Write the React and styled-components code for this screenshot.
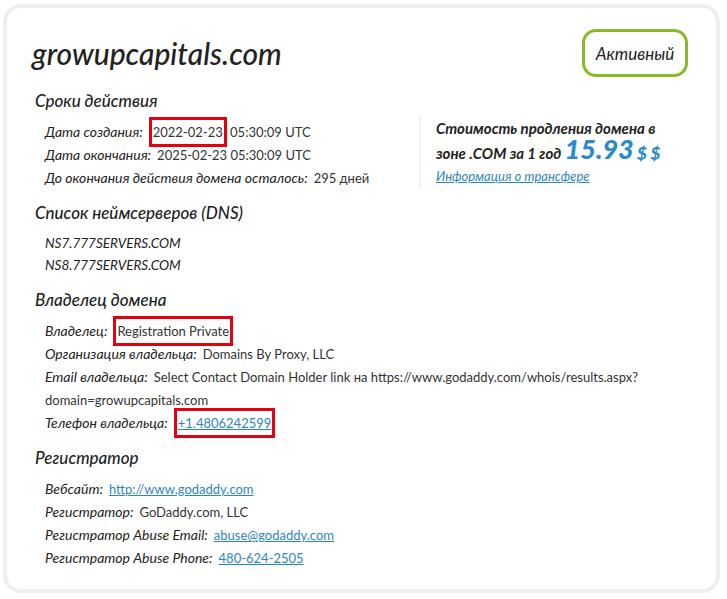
import React from 'react'
import styled, { createGlobalStyle } from 'styled-components'

const GlobalStyle = createGlobalStyle`
    body {
        margin: 0;
        background: #ffffff;
        font-family: "Lato", "Open Sans", sans-serif;
        color: #222;
    }
`

const periodRows = [
    { label: 'Дата создания:', value: '2022-02-23', rest: ' 05:30:09 UTC', mark: true },
    { label: 'Дата окончания:', value: '2025-02-23 05:30:09 UTC' },
    { label: 'До окончания действия домена осталось:', value: '295 дней' },
]

const ownerRows = [
    { label: 'Владелец:', value: 'Registration Private', mark: true },
    { label: 'Организация владельца:', value: 'Domains By Proxy, LLC' },
    { label: 'Email владельца:', value: 'Select Contact Domain Holder link на https://www.godaddy.com/whois/results.aspx?domain=growupcapitals.com' },
    { label: 'Телефон владельца:', value: '+1.4806242599', mark: true, link: true },
]

const registrarRows = [
    { label: 'Вебсайт:', value: 'http://www.godaddy.com', link: true },
    { label: 'Регистратор:', value: 'GoDaddy.com, LLC' },
    { label: 'Регистратор Abuse Email:', value: 'abuse@godaddy.com', link: true },
    { label: 'Регистратор Abuse Phone:', value: '480-624-2505', link: true },
]

const InfoRow = ({ row }) => {
    const content = row.link ? <Link href="#">{row.value}</Link> : row.value
    return (
        <Row>
            <Label>{row.label}</Label>
            {row.mark ? <Marked>{content}</Marked> : <Value>{content}</Value>}
            {row.rest && <Value>{row.rest}</Value>}
        </Row>
    )
}

const App = () => {
    return (
        <>
            <GlobalStyle />
            <Card>
                <Header>
                    <Domain>growupcapitals.com</Domain>
                    <Status>Активный</Status>
                </Header>

                <Section>
                    <Heading>Сроки действия</Heading>
                    <Split>
                        <Rows>
                            {periodRows.map(r => <InfoRow key={r.label} row={r} />)}
                        </Rows>
                        <PriceBox>
                            <PriceText>
                                Стоимость продления домена в зоне .COM за 1 год <Price>15.93</Price> <Currency>$ $</Currency>
                            </PriceText>
                            <TransferLink href="#">Информация о трансфере</TransferLink>
                        </PriceBox>
                    </Split>
                </Section>

                <Section>
                    <Heading>Список неймсерверов (DNS)</Heading>
                    <Rows>
                        <NsRow>NS7.777SERVERS.COM</NsRow>
                        <NsRow>NS8.777SERVERS.COM</NsRow>
                    </Rows>
                </Section>

                <Section>
                    <Heading>Владелец домена</Heading>
                    <Rows>
                        {ownerRows.map(r => <InfoRow key={r.label} row={r} />)}
                    </Rows>
                </Section>

                <Section>
                    <Heading>Регистратор</Heading>
                    <Rows>
                        {registrarRows.map(r => <InfoRow key={r.label} row={r} />)}
                    </Rows>
                </Section>
            </Card>
        </>
    )
}

const Card = styled.div`
    box-sizing: border-box;
    width: 717px;
    height: 589px;
    margin: 4px 0 0 3px;
    border: 4px solid #efefef;
    border-radius: 18px;
    background: #ffffff;
    padding: 21px 28px 0 25px;
`

const Header = styled.div`
    display: flex;
    justify-content: space-between;
    align-items: center;
`

const Domain = styled.h1`
    margin: 0;
    font-size: 30px;
    font-style: italic;
    font-weight: 500;
    color: #222;
    line-height: 34px;
`

const Status = styled.div`
    box-sizing: border-box;
    height: 48px;
    width: 106px;
    border: 3px solid #8cb92b;
    border-radius: 14px;
    display: flex;
    align-items: center;
    justify-content: center;
    font-size: 17px;
    font-style: italic;
    color: #222;
`

const Section = styled.div`
    margin-top: 12px;
`

const Heading = styled.h2`
    margin: 0 0 7px 3px;
    font-size: 17px;
    line-height: 24px;
    font-weight: 500;
    font-style: italic;
    color: #222;
`

const Split = styled.div`
    display: flex;
    align-items: flex-start;
`

const Rows = styled.div`
    flex: 1;
    padding-left: 13px;
    max-width: 630px;
`

const Row = styled.div`
    font-size: 14px;
    line-height: 23px;
`

const NsRow = styled.div`
    font-size: 13.5px;
    line-height: 22px;
    font-style: italic;
    color: #222;
`

const Label = styled.span`
    font-style: italic;
    color: #222;
    margin-right: 6px;
`

const Value = styled.span`
    font-size: 13px;
    line-height: 1;
    color: #333;
`

const Marked = styled.span`
    display: inline-block;
    font-size: 13px;
    color: #333;
    border: 3px solid #e3000f;
    padding: 4px 1px;
    line-height: 16px;
    margin: -7px 0;
    vertical-align: baseline;
`

const Link = styled.a`
    color: #2e86c1;
    text-decoration: underline;
`

const PriceBox = styled.div`
    box-sizing: border-box;
    width: 269px;
    height: 72px;
    margin-top: -4px;
    border-left: 2px solid #f1f1f1;
    padding: 0 8px 0 15px;
`

const PriceText = styled.div`
    font-size: 15px;
    line-height: 25px;
    font-style: italic;
    font-weight: 700;
    color: #222;
`

const Price = styled.span`
    font-size: 27px;
    line-height: 0;
    font-weight: 900;
    color: #2b8acb;
`

const Currency = styled.span`
    font-size: 17px;
    line-height: 0;
    font-weight: 900;
    color: #2b8acb;
`

const TransferLink = styled.a`
    display: block;
    font-size: 13px;
    font-style: italic;
    color: #2e86c1;
    line-height: 20px;
`

export default App
